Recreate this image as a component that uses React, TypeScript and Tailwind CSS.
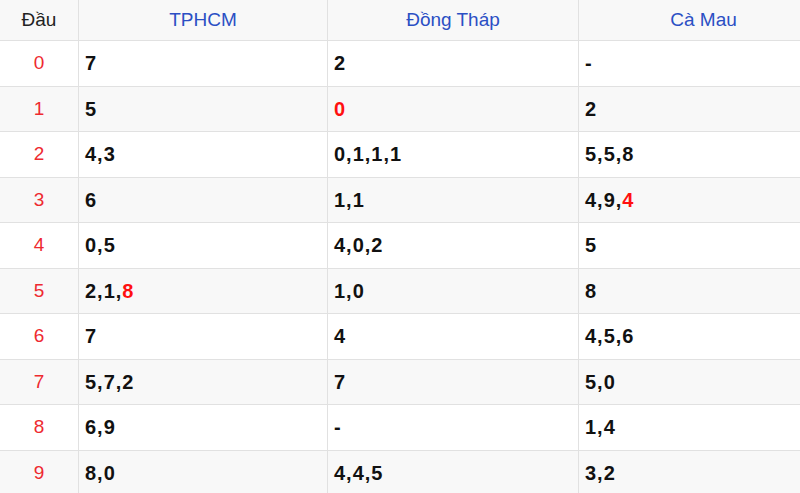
import React from "react";

type Part = { t: string; red?: boolean };
const rows: Part[][][] = [
  [[{ t: "7" }], [{ t: "2" }], [{ t: "-" }]],
  [[{ t: "5" }], [{ t: "0", red: true }], [{ t: "2" }]],
  [[{ t: "4,3" }], [{ t: "0,1,1,1" }], [{ t: "5,5,8" }]],
  [[{ t: "6" }], [{ t: "1,1" }], [{ t: "4,9," }, { t: "4", red: true }]],
  [[{ t: "0,5" }], [{ t: "4,0,2" }], [{ t: "5" }]],
  [[{ t: "2,1," }, { t: "8", red: true }], [{ t: "1,0" }], [{ t: "8" }]],
  [[{ t: "7" }], [{ t: "4" }], [{ t: "4,5,6" }]],
  [[{ t: "5,7,2" }], [{ t: "7" }], [{ t: "5,0" }]],
  [[{ t: "6,9" }], [{ t: "-" }], [{ t: "1,4" }]],
  [[{ t: "8,0" }], [{ t: "4,4,5" }], [{ t: "3,2" }]],
];

const heads = ["TPHCM", "Đồng Tháp", "Cà Mau"];

export default function App() {
  return (
    <div
      className="w-[800px] h-[493px] overflow-hidden bg-white"
      style={{ fontFamily: '"Liberation Sans", Arial, sans-serif' }}
    >
      <div className="grid w-[829px] grid-cols-[79px_249px_251px_250px]">
        <div className="h-[41px] flex items-center justify-center bg-[#f8f8f8] border-r border-b border-[#e1e1e1] text-[19px] text-[#222]">
          Đầu
        </div>
        {heads.map((h) => (
          <div
            key={h}
            className="h-[41px] flex items-center justify-center bg-[#f8f8f8] border-r border-b border-[#e1e1e1] text-[19px] text-[#2b4fc4]"
          >
            {h}
          </div>
        ))}
        {rows.map((r, i) => {
          const bg = i % 2 === 1 ? "bg-[#f8f8f8]" : "bg-white";
          return (
            <React.Fragment key={i}>
              <div
                className={`h-[45.5px] flex items-center justify-center border-r border-b border-[#e1e1e1] text-[19px] text-[#ee2a30] ${bg}`}
              >
                {i}
              </div>
              {r.map((cell, j) => (
                <div
                  key={j}
                  className={`h-[45.5px] flex items-center pl-[6px] border-r border-b border-[#e1e1e1] text-[20px] font-bold tracking-[1px] text-[#111] ${bg}`}
                >
                  {cell.map((p, k) => (
                    <span key={k} className={p.red ? "text-[#ff1010]" : ""}>
                      {p.t}
                    </span>
                  ))}
                </div>
              ))}
            </React.Fragment>
          );
        })}
      </div>
    </div>
  );
}
